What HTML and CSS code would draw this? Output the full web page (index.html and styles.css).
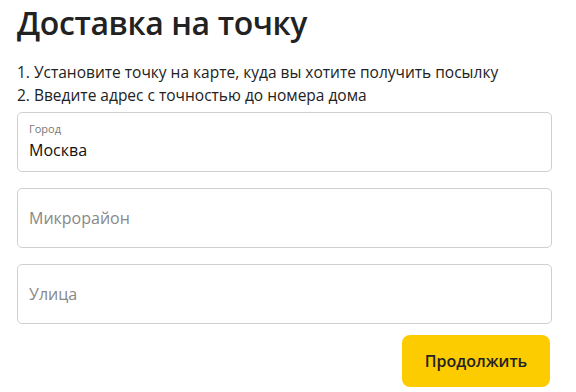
FILE: index.html
```html
<!DOCTYPE html>
<html lang="ru">
<head>
<meta charset="utf-8">
<link rel="stylesheet" href="styles.css">
</head>
<body>
<div class="page">
  <h1 class="title">Доставка на точку</h1>
  <ol class="steps">
    <li>1. Установите точку на карте, куда вы хотите получить посылку</li>
    <li>2. Введите адрес с точностью до номера дома</li>
  </ol>
  <div class="fields">
    <div class="field filled">
      <span class="label">Город</span>
      <span class="value">Москва</span>
    </div>
    <div class="field">
      <span class="placeholder">Микрорайон</span>
    </div>
    <div class="field">
      <span class="placeholder">Улица</span>
    </div>
  </div>
  <div class="actions">
    <button class="btn">Продолжить</button>
  </div>
</div>
</body>
</html>
```
FILE: styles.css
```css
* { box-sizing: border-box; }
html, body { margin: 0; background: #fff; }
body { font-family: "Open Sans", "Noto Sans", sans-serif; color: #222; }
.page { width: 535px; margin-left: 17px; }
.title {
  margin: 0;
  padding-top: 2px;
  font-size: 32px;
  font-weight: 600;
  line-height: 41px;
  color: #222;
  letter-spacing: -0.4px;
}
.steps {
  list-style: none;
  margin: 18px 0 0;
  padding: 0;
  font-size: 15.5px;
  line-height: 23px;
  color: #222;
}
.fields { display: flex; flex-direction: column; gap: 16px; margin-top: 5px; }
.field {
  height: 60px;
  border: 1px solid #cfcfcf;
  border-radius: 5px;
  padding: 0 11px;
  display: flex;
  flex-direction: column;
  justify-content: center;
}
.field.filled { justify-content: flex-start; padding-top: 9px; }
.label { font-size: 11px; line-height: 14px; color: #777; }
.value { font-size: 16px; line-height: 22px; color: #111; margin-top: 3px; }
.placeholder { font-size: 16px; line-height: 22px; color: #888; }
.actions { display: flex; justify-content: flex-end; margin-top: 11px; padding-right: 2px; }
.btn {
  width: 148px;
  height: 52px;
  border: 0;
  border-radius: 8px;
  background: #fccc00;
  font-family: inherit;
  font-size: 16px;
  font-weight: 600;
  color: #222;
}
```
